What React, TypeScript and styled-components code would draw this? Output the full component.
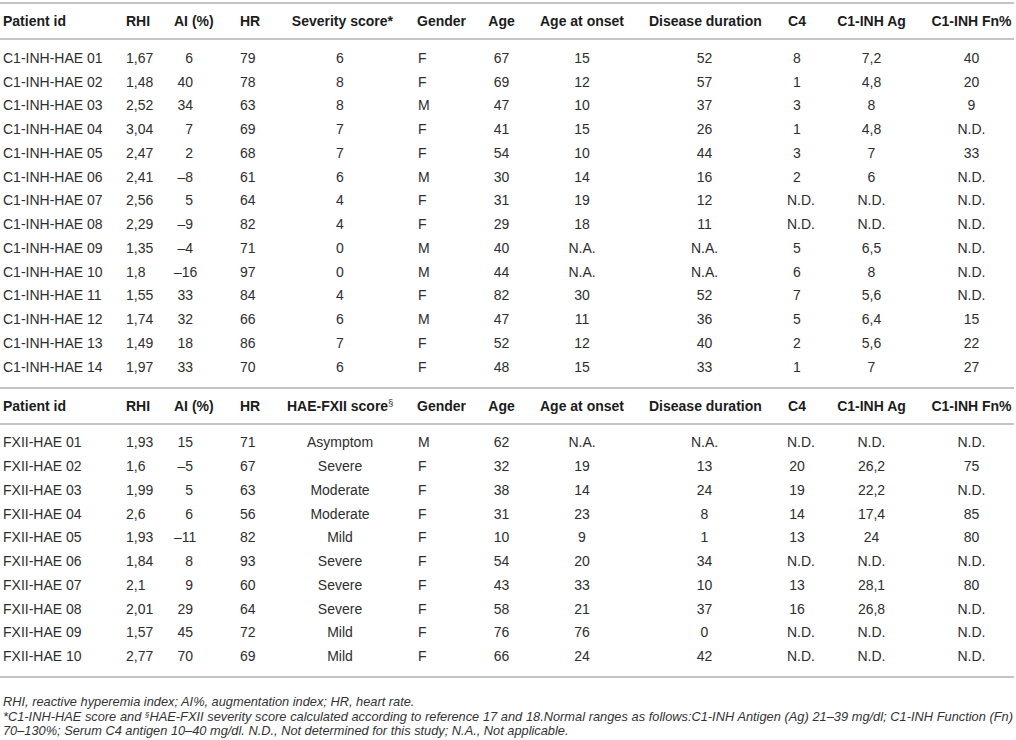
import React from "react";
import styled, { createGlobalStyle } from "styled-components";

const Global = createGlobalStyle`
  html, body { margin: 0; padding: 0; background: #ffffff; }
`;

type Align = "left" | "center" | "right";
type Col = { align: Align; pl: number; pr: number };

const COLS = "126px 48px 66px 47px 130px 71px 52px 109px 138px 49px 94px 86px";

const headCols: Col[] = [
  { align: "left", pl: 3, pr: 0 },
  { align: "left", pl: 0, pr: 0 },
  { align: "left", pl: 0, pr: 0 },
  { align: "left", pl: 0, pr: 0 },
  { align: "right", pl: 0, pr: 24 },
  { align: "left", pl: 0, pr: 0 },
  { align: "center", pl: 0, pr: 25 },
  { align: "center", pl: 0, pr: 25 },
  { align: "center", pl: 0, pr: 27 },
  { align: "center", pl: 0, pr: 29 },
  { align: "center", pl: 0, pr: 23 },
  { align: "center", pl: 0, pr: 3 },
];

const bodyCols: Col[] = [
  { align: "left", pl: 3, pr: 0 },
  { align: "left", pl: 0, pr: 0 },
  { align: "right", pl: 0, pr: 47 },
  { align: "left", pl: 0, pr: 0 },
  { align: "center", pl: 0, pr: 24 },
  { align: "left", pl: 1, pr: 0 },
  { align: "center", pl: 0, pr: 25 },
  { align: "center", pl: 0, pr: 25 },
  { align: "center", pl: 0, pr: 27 },
  { align: "center", pl: 0, pr: 29 },
  { align: "center", pl: 0, pr: 23 },
  { align: "center", pl: 0, pr: 3 },
];

const c1Rows: string[][] = [
  ["C1-INH-HAE 01", "1,67", "6", "79", "6", "F", "67", "15", "52", "8", "7,2", "40"],
  ["C1-INH-HAE 02", "1,48", "40", "78", "8", "F", "69", "12", "57", "1", "4,8", "20"],
  ["C1-INH-HAE 03", "2,52", "34", "63", "8", "M", "47", "10", "37", "3", "8", "9"],
  ["C1-INH-HAE 04", "3,04", "7", "69", "7", "F", "41", "15", "26", "1", "4,8", "N.D."],
  ["C1-INH-HAE 05", "2,47", "2", "68", "7", "F", "54", "10", "44", "3", "7", "33"],
  ["C1-INH-HAE 06", "2,41", "–8", "61", "6", "M", "30", "14", "16", "2", "6", "N.D."],
  ["C1-INH-HAE 07", "2,56", "5", "64", "4", "F", "31", "19", "12", "N.D.", "N.D.", "N.D."],
  ["C1-INH-HAE 08", "2,29", "–9", "82", "4", "F", "29", "18", "11", "N.D.", "N.D.", "N.D."],
  ["C1-INH-HAE 09", "1,35", "–4", "71", "0", "M", "40", "N.A.", "N.A.", "5", "6,5", "N.D."],
  ["C1-INH-HAE 10", "1,8", "–16", "97", "0", "M", "44", "N.A.", "N.A.", "6", "8", "N.D."],
  ["C1-INH-HAE 11", "1,55", "33", "84", "4", "F", "82", "30", "52", "7", "5,6", "N.D."],
  ["C1-INH-HAE 12", "1,74", "32", "66", "6", "M", "47", "11", "36", "5", "6,4", "15"],
  ["C1-INH-HAE 13", "1,49", "18", "86", "7", "F", "52", "12", "40", "2", "5,6", "22"],
  ["C1-INH-HAE 14", "1,97", "33", "70", "6", "F", "48", "15", "33", "1", "7", "27"],
];

const fxRows: string[][] = [
  ["FXII-HAE 01", "1,93", "15", "71", "Asymptom", "M", "62", "N.A.", "N.A.", "N.D.", "N.D.", "N.D."],
  ["FXII-HAE 02", "1,6", "–5", "67", "Severe", "F", "32", "19", "13", "20", "26,2", "75"],
  ["FXII-HAE 03", "1,99", "5", "63", "Moderate", "F", "38", "14", "24", "19", "22,2", "N.D."],
  ["FXII-HAE 04", "2,6", "6", "56", "Moderate", "F", "31", "23", "8", "14", "17,4", "85"],
  ["FXII-HAE 05", "1,93", "–11", "82", "Mild", "F", "10", "9", "1", "13", "24", "80"],
  ["FXII-HAE 06", "1,84", "8", "93", "Severe", "F", "54", "20", "34", "N.D.", "N.D.", "N.D."],
  ["FXII-HAE 07", "2,1", "9", "60", "Severe", "F", "43", "33", "10", "13", "28,1", "80"],
  ["FXII-HAE 08", "2,01", "29", "64", "Severe", "F", "58", "21", "37", "16", "26,8", "N.D."],
  ["FXII-HAE 09", "1,57", "45", "72", "Mild", "F", "76", "76", "0", "N.D.", "N.D.", "N.D."],
  ["FXII-HAE 10", "2,77", "70", "69", "Mild", "F", "66", "24", "42", "N.D.", "N.D.", "N.D."],
];

const Page = styled.div`
  width: 1016px;
  padding-top: 2px;
  font-family: "Liberation Sans", Arial, "Helvetica Neue", sans-serif;
  color: #2e2e2e;
`;

const Rule = styled.div`
  height: 2px;
  width: 1014px;
  background: #c4c4c4;
`;

const Row = styled.div<{ $h: number }>`
  display: grid;
  grid-template-columns: ${COLS};
  height: ${(p) => p.$h}px;
  align-items: center;
`;

const Cell = styled.div<{ $align: Align; $pl: number; $pr: number; $bold?: boolean }>`
  text-align: ${(p) => p.$align};
  padding-left: ${(p) => p.$pl}px;
  padding-right: ${(p) => p.$pr}px;
  font-size: 14px;
  font-weight: ${(p) => (p.$bold ? 700 : 400)};
  color: ${(p) => (p.$bold ? "#1c1c1c" : "#2e2e2e")};
  white-space: nowrap;
`;

const Body = styled.div`
  padding: 6px 0 8px;
`;

const Sup = styled.sup`
  font-size: 9px;
  font-weight: 400;
  line-height: 0;
  vertical-align: 5px;
`;

const Notes = styled.div`
  margin-top: 17px;
  padding-left: 3px;
  width: 1010px;
  font-size: 12.8px;
  font-style: italic;
  line-height: 14.5px;
  color: #333;
`;

const NoteLine = styled.div<{ $justify?: boolean }>`
  white-space: nowrap;
  text-align: ${(p) => (p.$justify ? "justify" : "left")};
  text-align-last: ${(p) => (p.$justify ? "justify" : "left")};
`;

const NoteSup = styled.sup`
  font-size: 8px;
  line-height: 0;
  vertical-align: 4px;
`;

const HeadRow: React.FC<{ labels: React.ReactNode[] }> = ({ labels }) => (
  <Row $h={34}>
    {labels.map((l, i) => (
      <Cell key={i} $align={headCols[i].align} $pl={headCols[i].pl} $pr={headCols[i].pr} $bold>
        {l}
      </Cell>
    ))}
  </Row>
);

const DataRows: React.FC<{ rows: string[][] }> = ({ rows }) => (
  <Body>
    {rows.map((r, ri) => (
      <Row $h={23.75} key={ri}>
        {r.map((v, i) => (
          <Cell key={i} $align={bodyCols[i].align} $pl={bodyCols[i].pl} $pr={bodyCols[i].pr}>
            {v}
          </Cell>
        ))}
      </Row>
    ))}
  </Body>
);

const common = ["Age", "Age at onset", "Disease duration", "C4", "C1-INH Ag", "C1-INH Fn%"];

export default function App() {
  const head1: React.ReactNode[] = ["Patient id", "RHI", "AI (%)", "HR", "Severity score*", "Gender", ...common];
  const head2: React.ReactNode[] = [
    "Patient id",
    "RHI",
    "AI (%)",
    "HR",
    <>
      HAE-FXII score<Sup>§</Sup>
    </>,
    "Gender",
    ...common,
  ];
  return (
    <>
      <Global />
      <Page>
        <Rule />
        <HeadRow labels={head1} />
        <Rule />
        <DataRows rows={c1Rows} />
        <Rule />
        <HeadRow labels={head2} />
        <Rule />
        <DataRows rows={fxRows} />
        <Rule />
        <Notes>
          <NoteLine>RHI, reactive hyperemia index; AI%, augmentation index; HR, heart rate.</NoteLine>
          <NoteLine $justify>
            *C1-INH-HAE score and <NoteSup>§</NoteSup>HAE-FXII severity score calculated according to reference 17 and
            18.Normal ranges as follows:C1-INH Antigen (Ag) 21–39 mg/dl; C1-INH Function (Fn)
          </NoteLine>
          <NoteLine>70–130%; Serum C4 antigen 10–40 mg/dl. N.D., Not determined for this study; N.A., Not applicable.</NoteLine>
        </Notes>
      </Page>
    </>
  );
}
